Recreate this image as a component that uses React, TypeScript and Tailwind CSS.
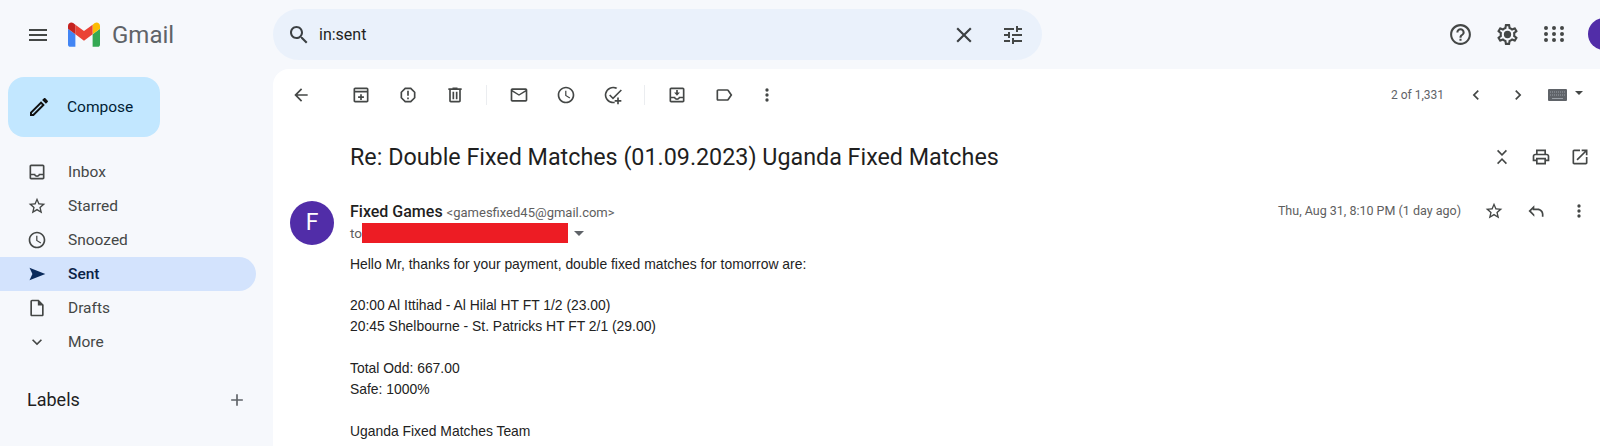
import React from "react";

const P = {
  menu: "M3 18h18v-2H3v2zm0-5h18v-2H3v2zm0-7v2h18V6H3z",
  search: "M15.5 14h-.79l-.28-.27C15.41 12.59 16 11.11 16 9.5 16 5.91 13.09 3 9.5 3S3 5.91 3 9.5 5.91 16 9.5 16c1.61 0 3.09-.59 4.23-1.57l.27.28v.79l5 4.99L20.49 19l-4.99-5zm-6 0C7.01 14 5 11.99 5 9.5S7.01 5 9.5 5 14 7.01 14 9.5 11.99 14 9.5 14z",
  close: "M19 6.41L17.59 5 12 10.59 6.41 5 5 6.41 10.59 12 5 17.59 6.41 19 12 13.41 17.59 19 19 17.59 13.41 12z",
  tune: "M3 17v2h6v-2H3zM3 5v2h10V5H3zm10 16v-2h8v-2h-8v-2h-2v6h2zM7 9v2H3v2h4v2h2V9H7zm14 4v-2H11v2h10zm-6-4h2V7h4V5h-4V3h-2v6z",
  help: "M11 18h2v-2h-2v2zm1-16C6.48 2 2 6.48 2 12s4.48 10 10 10 10-4.48 10-10S17.52 2 12 2zm0 18c-4.41 0-8-3.59-8-8s3.59-8 8-8 8 3.59 8 8-3.59 8-8 8zm0-14c-2.21 0-4 1.79-4 4h2c0-1.1.9-2 2-2s2 .9 2 2c0 2-3 1.75-3 5h2c0-2.25 3-2.5 3-5 0-2.21-1.79-4-4-4z",
  gear: "M19.43 12.98c.04-.32.07-.64.07-.98 0-.34-.03-.66-.07-.98l2.11-1.65c.19-.15.24-.42.12-.64l-2-3.46c-.09-.16-.26-.25-.44-.25-.06 0-.12.01-.17.03l-2.49 1c-.52-.4-1.08-.73-1.69-.98l-.38-2.65C14.46 2.18 14.25 2 14 2h-4c-.25 0-.46.18-.49.42l-.38 2.65c-.61.25-1.17.59-1.69.98l-2.49-1c-.06-.02-.12-.03-.18-.03-.17 0-.34.09-.43.25l-2 3.46c-.13.22-.07.49.12.64l2.11 1.65c-.04.32-.07.65-.07.98 0 .33.03.66.07.98l-2.11 1.65c-.19.15-.24.42-.12.64l2 3.46c.09.16.26.25.44.25.06 0 .12-.01.17-.03l2.49-1c.52.4 1.08.73 1.69.98l.38 2.65c.03.24.24.42.49.42h4c.25 0 .46-.18.49-.42l.38-2.65c.61-.25 1.17-.59 1.69-.98l2.49 1c.06.02.12.03.18.03.17 0 .34-.09.43-.25l2-3.46c.12-.22.07-.49-.12-.64l-2.11-1.65zm-1.98-1.71c.04.31.05.52.05.73 0 .21-.02.43-.05.73l-.14 1.13.89.7 1.08.84-.7 1.21-1.27-.51-1.04-.42-.9.68c-.43.32-.84.56-1.25.73l-1.06.43-.16 1.13-.2 1.35h-1.4l-.19-1.35-.16-1.13-1.06-.43c-.43-.18-.83-.41-1.23-.71l-.91-.7-1.06.43-1.27.51-.7-1.21 1.08-.84.89-.7-.14-1.13c-.03-.31-.05-.54-.05-.74s.02-.43.05-.73l.14-1.13-.89-.7-1.08-.84.7-1.21 1.27.51 1.04.42.9-.68c.43-.32.84-.56 1.25-.73l1.06-.43.16-1.13.2-1.35h1.39l.19 1.35.16 1.13 1.06.43c.43.18.83.41 1.23.71l.91.7 1.06-.43 1.27-.51.7 1.21-1.07.85-.89.7.14 1.13zM12 8.5a3.5 3.5 0 1 0 0 7 3.5 3.5 0 0 0 0-7z",
  apps: "M4 8a2 2 0 1 0 0-4 2 2 0 0 0 0 4zm8 0a2 2 0 1 0 0-4 2 2 0 0 0 0 4zm8 0a2 2 0 1 0 0-4 2 2 0 0 0 0 4zM4 14a2 2 0 1 0 0-4 2 2 0 0 0 0 4zm8 0a2 2 0 1 0 0-4 2 2 0 0 0 0 4zm8 0a2 2 0 1 0 0-4 2 2 0 0 0 0 4zM4 20a2 2 0 1 0 0-4 2 2 0 0 0 0 4zm8 0a2 2 0 1 0 0-4 2 2 0 0 0 0 4zm8 0a2 2 0 1 0 0-4 2 2 0 0 0 0 4z",
  pen: "M3 17.25V21h3.75L17.81 9.94l-3.75-3.75L3 17.25zM5.92 19H5v-.92l9.06-9.06.92.92L5.92 19zM20.71 5.63l-2.34-2.34c-.2-.2-.45-.29-.71-.29s-.51.1-.7.29l-1.83 1.83 3.75 3.75 1.83-1.83c.39-.39.39-1.02 0-1.41z",
  inbox: "M19 3H5c-1.1 0-2 .9-2 2v14c0 1.1.9 2 2 2h14c1.1 0 2-.9 2-2V5c0-1.1-.9-2-2-2zm0 16H5v-3h3.56c.69 1.19 1.97 2 3.45 2s2.75-.81 3.45-2H19v3zm0-5h-4.99c0 1.1-.9 2-2 2s-2-.9-2-2H5V5h14v9z",
  star: "M22 9.24l-7.19-.62L12 2 9.19 8.63 2 9.24l5.46 4.73L5.82 21 12 17.27 18.18 21l-1.63-7.03L22 9.24zM12 15.4l-3.76 2.27 1-4.28-3.32-2.88 4.38-.38L12 6.1l1.71 4.04 4.38.38-3.32 2.88 1 4.28L12 15.4z",
  clock: "M11.99 2C6.47 2 2 6.48 2 12s4.47 10 9.99 10C17.52 22 22 17.52 22 12S17.52 2 11.99 2zM12 20c-4.42 0-8-3.58-8-8s3.58-8 8-8 8 3.58 8 8-3.58 8-8 8zm.5-13H11v6l5.25 3.15.75-1.23-4.5-2.67z",
  send: "M3 4.500 22 12 3 19.500 6.500 12z",
  draft: "M14 2H6c-1.1 0-1.99.9-1.99 2L4 20c0 1.1.89 2 1.99 2H18c1.1 0 2-.9 2-2V8l-6-6zM6 20V4h7v5h5v11H6z",
  down: "M16.59 8.59L12 13.17 7.41 8.59 6 10l6 6 6-6z",
  add: "M19 13h-6v6h-2v-6H5v-2h6V5h2v6h6v2z",
  back: "M20 11H7.83l5.59-5.59L12 4l-8 8 8 8 1.41-1.41L7.83 13H20v-2z",
  archive: "M19 3H5c-1.1 0-2 .9-2 2v14c0 1.1.9 2 2 2h14c1.1 0 2-.9 2-2V5c0-1.1-.9-2-2-2zM5 5h14v2H5V5zm0 14V9h14v10H5zm8-8h-2v2.500H8.500v2H11V18h2v-2.500h2.500v-2H13V11z",
  report: "M15.73 3H8.27L3 8.27v7.46L8.27 21h7.46L21 15.73V8.27L15.73 3zM19 14.9L14.9 19H9.1L5 14.9V9.1L9.1 5h5.8L19 9.1v5.8zM11 7h2v6h-2zM11 15h2v2h-2z",
  trash: "M15 4V3H9v1H4v2h1v13c0 1.1.9 2 2 2h10c1.1 0 2-.9 2-2V6h1V4h-5zm2 15H7V6h10v13zM9 8h2v9H9zm4 0h2v9h-2z",
  mail: "M20 4H4c-1.1 0-1.99.9-1.99 2L2 18c0 1.1.9 2 2 2h16c1.1 0 2-.9 2-2V6c0-1.1-.9-2-2-2zm0 14H4V8l8 5 8-5v10zm-8-7L4 6h16l-8 5z",
  move: "M19 3H5c-1.1 0-2 .9-2 2v14c0 1.1.9 2 2 2h14c1.1 0 2-.9 2-2V5c0-1.1-.9-2-2-2zm0 16H5v-3h3.56c.69 1.19 1.97 2 3.45 2s2.75-.81 3.45-2H19v3zm0-5h-4.99c0 1.1-.9 2-2 2s-2-.9-2-2H5V5h14v9zM13 6h-2v3H8.500l3.500 4 3.500-4H13V6z",
  label: "M17.63 5.84C17.27 5.33 16.67 5 16 5L5 5.01C3.9 5.01 3 5.9 3 7v10c0 1.1.9 1.99 2 1.99L16 19c.67 0 1.27-.33 1.63-.84L22 12l-4.37-6.16zM16 17H5V7h11l3.55 5L16 17z",
  more: "M12 8a2 2 0 1 0 0-4 2 2 0 0 0 0 4zm0 6a2 2 0 1 0 0-4 2 2 0 0 0 0 4zm0 6a2 2 0 1 0 0-4 2 2 0 0 0 0 4z",
  prev: "M15.41 7.41L14 6l-6 6 6 6 1.41-1.41L10.83 12z",
  next: "M10 6L8.59 7.41 13.17 12l-4.58 4.59L10 18l6-6z",
  print: "M19 8h-1V3H6v5H5c-1.66 0-3 1.34-3 3v6h4v4h12v-4h4v-6c0-1.66-1.34-3-3-3zM8 5h8v3H8V5zm8 12v2H8v-4h8v2zm2-2v-2H6v2H4v-4c0-.55.45-1 1-1h14c.55 0 1 .45 1 1v4h-2z",
  open: "M19 19H5V5h7V3H5c-1.11 0-2 .9-2 2v14c0 1.1.89 2 2 2h14c1.1 0 2-.9 2-2v-7h-2v7zM14 3v2h3.59l-9.83 9.83 1.41 1.41L19 6.41V10h2V3h-7z",
  expand: "M7.400 3.400 6 4.800l6 6 6-6-1.400-1.400L12 8zM12 13.200l-6 6 1.400 1.400 4.600-4.600 4.600 4.600 1.400-1.400z",
  reply: "M10 9V5l-7 7 7 7v-2.800L6 12l2-2v1h6c2.800 0 5 2.200 5 5v3h2v-3c0-3.900-3.100-7-7-7h-4z",
  addTask: "M21.300 5.300 12 14.600l-3.300-3.300-1.400 1.400 4.700 4.700L22.700 6.700zM12 20a8 8 0 1 1 3.700-15.100l1.500-1.500A10 10 0 1 0 14 21.800v-2zM19 15h-2v3h-3v2h3v3h2v-3h3v-2h-3z",
};

const Ico = ({ d, size = 24, className = "fill-[#444746]" }: { d: string; size?: number; className?: string }) => (
  <svg viewBox="0 0 24 24" width={size} height={size} className={`shrink-0 ${className}`}>
    <path d={d} />
  </svg>
);

const Logo = () => (
  <svg viewBox="0 0 52 40" width="32" height="25" className="shrink-0">
    <path fill="#4285f4" d="M3.500 40H12V19.500L0 10.500v26C0 38.500 1.500 40 3.500 40z" />
    <path fill="#34a853" d="M40 40h8.500c2 0 3.500-1.500 3.500-3.500v-26l-12 9z" />
    <path fill="#fbbc04" d="M40 4v15.500l12-9V6c0-4.400-5-7-8.500-4.500z" />
    <path fill="#ea4335" d="M12 19.500V4l14 10.500L40 4v15.500L26 30z" />
    <path fill="#c5221f" d="M0 6v4.500l12 9V4L8.500 1.500C5-1 0 1.600 0 6z" />
  </svg>
);

const Keyboard = () => (
  <svg viewBox="0 0 19 12" width="19" height="12" className="shrink-0">
    <rect width="19" height="12" rx="1" fill="#5f6368" />
    <path d="M2 3h15M2 6h15" stroke="#9aa0a6" strokeWidth="1" strokeDasharray="1 1" />
    <path d="M4 9.500h11" stroke="#9aa0a6" strokeWidth="1" />
  </svg>
);

const nav = [
  { d: P.inbox, t: "Inbox" },
  { d: P.star, t: "Starred" },
  { d: P.clock, t: "Snoozed" },
  { d: P.send, t: "Sent", active: true },
  { d: P.draft, t: "Drafts" },
  { d: P.down, t: "More" },
];

const Btn = ({ d, className = "w-[47px]", size = 20 }: { d: string; className?: string; size?: number }) => (
  <div className={`flex justify-center ${className}`}>
    <Ico d={d} size={size} />
  </div>
);

const Divider = () => <div className="mx-[8px] h-5 w-px bg-[#ebedf0]" />;

export default function App() {
  return (
    <div className="h-[446px] w-[1600px] overflow-hidden bg-[#f6f8fc] font-['Roboto',sans-serif] text-[#202124]">
      <header className="flex h-[69px]">
        <div className="flex w-[273px] shrink-0 items-center pl-[26px]">
          <Ico d={P.menu} />
          <div className="ml-[18px]"><Logo /></div>
          <span className="ml-[12px] text-[24px] text-[#5f6368]">Gmail</span>
        </div>
        <div className="mt-[9px] flex h-[51px] w-[769px] items-center rounded-full bg-[#eaf1fb] pl-[14px] pr-[17px]">
          <Ico d={P.search} size={24} className="fill-[#3c4043]" />
          <span className="ml-[8px] text-base text-[#1f1f1f]">in:sent</span>
          <div className="ml-auto flex items-center gap-[24px]">
            <Ico d={P.close} size={26} className="fill-[#3c4043]" />
            <Ico d={P.tune} size={24} />
          </div>
        </div>
        <div className="ml-auto flex items-center pb-[1px]">
          <div className="flex items-center gap-[22px]">
            <Ico d={P.help} size={25} />
            <Ico d={P.gear} size={25} />
            <Ico d={P.apps} size={24} />
          </div>
          <div className="ml-[22px] mr-[-20px] h-8 w-8 rounded-full bg-[#512da8]" />
        </div>
      </header>

      <div className="flex h-[377px]">
        <aside className="w-[273px] shrink-0">
          <div className="ml-2 mt-2 flex h-[60px] w-[152px] items-center rounded-2xl bg-[#c2e7ff] pl-[19px] text-[15.5px] text-[#001d35]">
            <Ico d={P.pen} size={24} className="fill-[#111]" />
            <span className="ml-[16px] pt-[2px]">Compose</span>
          </div>
          <nav className="mt-[18px] w-[256px]">
            {nav.map((n) => (
              <div
                key={n.t}
                className={`flex h-[34px] items-center rounded-r-full pl-[27px] text-[15.5px] ${n.active ? "bg-[#d3e3fd] font-medium text-[#0b2347]" : "text-[#444746]"}`}
              >
                <Ico d={n.d} size={20} className={n.active ? "fill-[#0b2b5c]" : "fill-[#444746]"} />
                <span className="ml-[21px] pt-[2px]">{n.t}</span>
              </div>
            ))}
          </nav>
          <div className="mt-[27px] flex w-[256px] items-center justify-between pl-[27px] pr-[9px]">
            <span className="text-[18px] text-[#1f1f1f]">Labels</span>
            <Ico d={P.add} size={20} className="fill-[#5f6368]" />
          </div>
        </aside>

        <main className="min-w-0 flex-1 rounded-tl-2xl bg-white">
          <div className="flex h-[50px] items-center pl-[4px] pt-[1px]">
            <Btn d={P.back} />
            <div className="ml-[13px] flex items-center">
              <Btn d={P.archive} />
              <Btn d={P.report} />
              <Btn d={P.trash} />
            </div>
            <Divider />
            <div className="flex items-center">
              <Btn d={P.mail} />
              <Btn d={P.clock} />
              <Btn d={P.addTask} />
            </div>
            <Divider />
            <div className="flex items-center">
              <Btn d={P.move} />
              <Btn d={P.label} />
              <Btn d={P.more} className="w-[40px]" />
            </div>
            <div className="ml-auto flex items-center pr-[17px]">
              <span className="text-xs text-[#5f6368]">2 of 1,331</span>
              <Btn d={P.prev} className="ml-[8px] w-[47px]" />
              <Btn d={P.next} className="w-[38px]" />
              <div className="ml-[11px]"><Keyboard /></div>
              <div className="mb-[4px] ml-[8px] h-0 w-0 border-x-4 border-t-4 border-x-transparent border-t-[#444746]" />
            </div>
          </div>

          <div className="flex h-[62px] items-center pl-[77px] pr-[1px] pt-[14px]">
            <h1 className="text-[23.3px] font-normal text-[#1f1f1f]">Re: Double Fixed Matches (01.09.2023) Uganda Fixed Matches</h1>
            <div className="ml-auto flex items-center">
              <Btn d={P.expand} className="w-[39px]" />
              <Btn d={P.print} className="w-[39px]" />
              <Btn d={P.open} className="w-[39px]" />
            </div>
          </div>

          <div className="flex pl-[17px] pt-[20px]">
            <div className="flex h-11 w-11 shrink-0 items-center justify-center rounded-full bg-[#512da8] text-[23px] text-white">F</div>
            <div className="ml-[16px] min-w-0 flex-1">
              <div className="flex h-[20px] items-start justify-between pr-[10px]">
                <div className="flex items-baseline gap-[4px] pt-[1px]">
                  <span className="text-[16px] font-medium leading-5 text-[#1f1f1f]">Fixed Games</span>
                  <span className="text-[13px] text-[#5e5e5e]">&lt;gamesfixed45@gmail.com&gt;</span>
                </div>
                <div className="flex items-center">
                  <span className="text-[12.5px] text-[#5e5e5e]">Thu, Aug 31, 8:10 PM (1 day ago)</span>
                  <Btn d={P.star} className="ml-[22px] w-[22px]" />
                  <Btn d={P.reply} className="ml-[20px] w-[22px]" />
                  <Btn d={P.more} className="ml-[21px] w-[22px]" />
                </div>
              </div>
              <div className="mt-[2px] flex h-[20px] items-center">
                <span className="w-[12px] text-[13.5px] text-[#5e5e5e]">to</span>
                <div className="h-5 w-[206px] bg-[#ed1c24]" />
                <div className="ml-[6px] h-0 w-0 border-x-[5px] border-t-[5px] border-x-transparent border-t-[#5f6368]" />
              </div>
              <div className="mt-[10.5px] font-['Liberation_Sans',sans-serif] text-[13.9px] leading-[20.9px] text-[#222]">
                <p>Hello Mr, thanks for your payment, double fixed matches for tomorrow are:</p>
                <p className="mt-[20.9px]">20:00 Al Ittihad - Al Hilal HT FT 1/2 (23.00)</p>
                <p>20:45 Shelbourne - St. Patricks HT FT 2/1 (29.00)</p>
                <p className="mt-[20.9px]">Total Odd: 667.00</p>
                <p>Safe: 1000%</p>
                <p className="mt-[20.9px]">Uganda Fixed Matches Team</p>
              </div>
            </div>
          </div>
        </main>
      </div>
    </div>
  );
}
